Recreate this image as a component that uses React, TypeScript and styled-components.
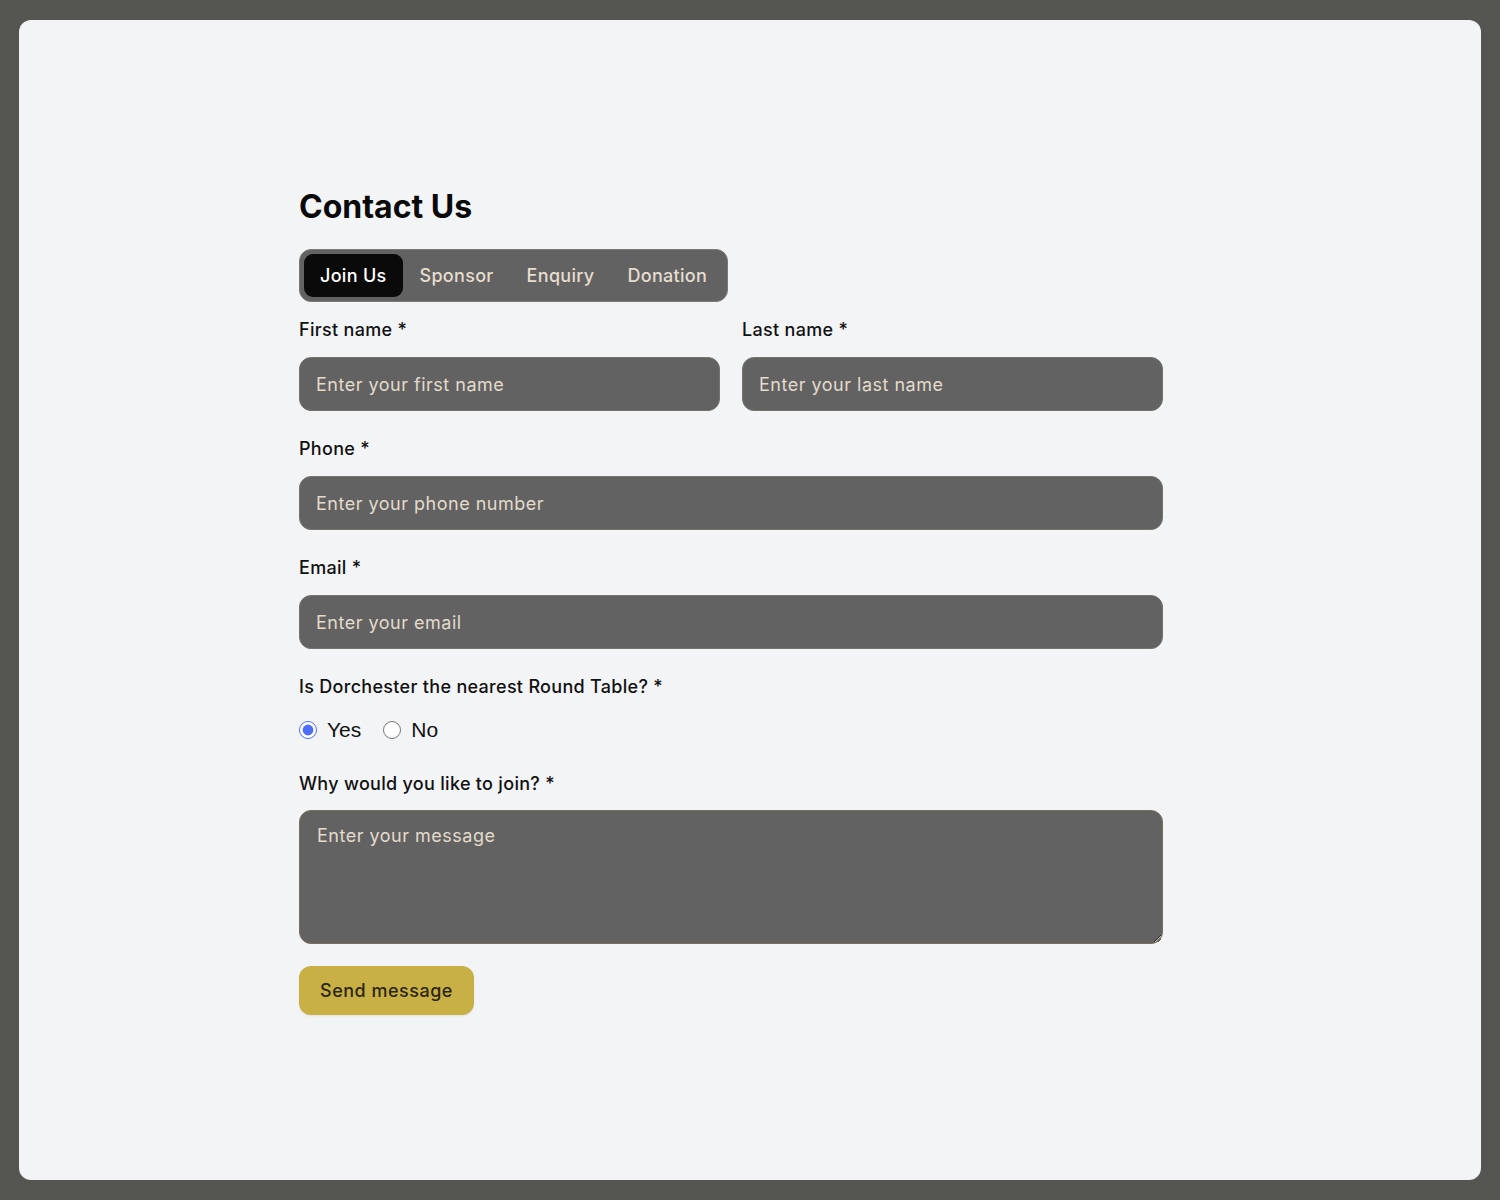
import { useState } from "react";
import styled, { createGlobalStyle } from "styled-components";

const GlobalStyle = createGlobalStyle`
    html, body {
        margin: 0;
        padding: 0;
        background: #555551;
    }
    * { box-sizing: border-box; }
`;

const Frame = styled.div`
    padding: 20px 19px 20px 19px;
    min-height: 1200px;
`;

const Card = styled.main`
    background: #f3f4f6;
    border-radius: 12px;
    height: 1160px;
    padding: 168px 0 0 280px;
    font-family: Inter, "Open Sans", sans-serif;
`;

const Form = styled.form`
    width: 864px;
    display: flex;
    flex-direction: column;
`;

const Title = styled.h1`
    margin: 0 0 24px;
    font-size: 32px;
    line-height: 37px;
    font-weight: 700;
    color: #0a0a0a;
`;

const Tabs = styled.div`
    display: inline-flex;
    align-self: flex-start;
    gap: 1px;
    padding: 4px;
    background: #626262;
    border: 1px solid #7a7a76;
    border-radius: 12px;
    margin-bottom: 16px;
`;

const Tab = styled.button<{ $active?: boolean }>`
    border: none;
    cursor: pointer;
    font-family: inherit;
    font-size: 18px;
    font-weight: 500;
    letter-spacing: 0.3px;
    height: 43px;
    padding: 0 16px;
    border-radius: 9px;
    background: ${(p) => (p.$active ? "#0a0a0a" : "transparent")};
    color: ${(p) => (p.$active ? "#ffffff" : "#e6ddcf")};
`;

const Row = styled.div`
    display: grid;
    grid-template-columns: 1fr 1fr;
    gap: 22px;
`;

const Field = styled.div<{ $gap?: number }>`
    display: flex;
    flex-direction: column;
    margin-bottom: ${(p) => p.$gap ?? 26}px;
`;

const Label = styled.label<{ $space?: number }>`
    font-size: 18px;
    font-weight: 500;
    letter-spacing: 0.3px;
    line-height: 24px;
    color: #111;
    margin-bottom: ${(p) => p.$space ?? 15}px;
`;

const Input = styled.input`
    height: 54px;
    width: 100%;
    padding: 0 16px;
    background: #626262;
    border: 1px solid #74736c;
    border-radius: 12px;
    font-family: inherit;
    font-size: 18px;
    letter-spacing: 0.5px;
    color: #f3eee4;
    outline: none;
    &::placeholder {
        color: #e3dbcc;
    }
`;

const TextArea = styled.textarea`
    height: 134px;
    width: 100%;
    padding: 13px 17px;
    background: #626262;
    border: 1px solid #7a6f5c;
    border-radius: 12px;
    font-family: inherit;
    font-size: 18px;
    letter-spacing: 0.5px;
    line-height: 24px;
    color: #f3eee4;
    outline: none;
    resize: vertical;
    &::placeholder {
        color: #e3dbcc;
    }
`;

const RadioGroup = styled.div`
    display: flex;
    align-items: center;
    gap: 22px;
`;

const RadioOption = styled.label`
    display: flex;
    align-items: center;
    gap: 10px;
    font-family: "Liberation Sans", Arial, sans-serif;
    font-size: 21px;
    color: #111;
    cursor: pointer;
    input {
        margin: 0;
        width: 18px;
        height: 18px;
        accent-color: #4f6ef7;
    }
`;

const SendButton = styled.button`
    align-self: flex-start;
    height: 49px;
    padding: 0 21px;
    border: none;
    border-radius: 12px;
    background: #c8b045;
    color: #2b2614;
    font-family: inherit;
    font-size: 18px;
    font-weight: 500;
    letter-spacing: 0.5px;
    cursor: pointer;
    box-shadow: 0 1px 2px rgba(0, 0, 0, 0.08);
    margin-top: -4px;
`;

const tabs = ["Join Us", "Sponsor", "Enquiry", "Donation"];

function App() {
    const [active, setActive] = useState("Join Us");
    const [nearest, setNearest] = useState("yes");

    return (
        <>
            <GlobalStyle />
            <Frame>
                <Card>
                    <Form onSubmit={(e) => e.preventDefault()}>
                        <Title>Contact Us</Title>
                        <Tabs>
                            {tabs.map((t) => (
                                <Tab key={t} type="button" $active={t === active} onClick={() => setActive(t)}>
                                    {t}
                                </Tab>
                            ))}
                        </Tabs>
                        <Row>
                            <Field>
                                <Label>First name *</Label>
                                <Input placeholder="Enter your first name" />
                            </Field>
                            <Field>
                                <Label>Last name *</Label>
                                <Input placeholder="Enter your last name" />
                            </Field>
                        </Row>
                        <Field>
                            <Label>Phone *</Label>
                            <Input placeholder="Enter your phone number" />
                        </Field>
                        <Field>
                            <Label>Email *</Label>
                            <Input placeholder="Enter your email" />
                        </Field>
                        <Field $gap={30}>
                            <Label $space={19}>Is Dorchester the nearest Round Table? *</Label>
                            <RadioGroup>
                                <RadioOption>
                                    <input type="radio" name="nearest" checked={nearest === "yes"} onChange={() => setNearest("yes")} />
                                    Yes
                                </RadioOption>
                                <RadioOption>
                                    <input type="radio" name="nearest" checked={nearest === "no"} onChange={() => setNearest("no")} />
                                    No
                                </RadioOption>
                            </RadioGroup>
                        </Field>
                        <Field>
                            <Label $space={14}>Why would you like to join? *</Label>
                            <TextArea placeholder="Enter your message" />
                        </Field>
                        <SendButton type="submit">Send message</SendButton>
                    </Form>
                </Card>
            </Frame>
        </>
    );
}

export default App;
